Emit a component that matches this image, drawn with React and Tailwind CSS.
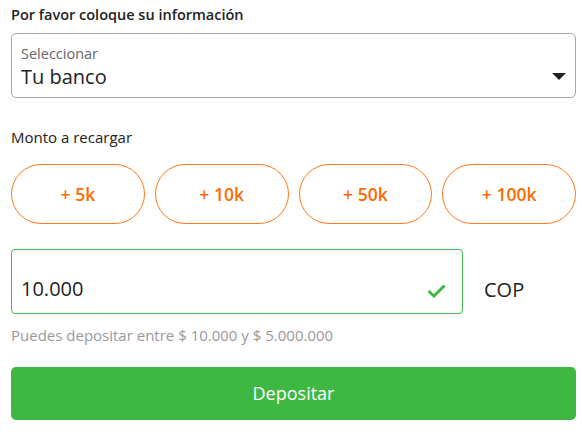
import { useState } from "react";

const amounts = ["+ 5k", "+ 10k", "+ 50k", "+ 100k"];

export default function App() {
    const [value, setValue] = useState("10.000");

    return (
        <div className="w-[582px] h-[439px] bg-white pl-[11px] pr-[6px] pt-[5px] text-[#222]" style={{ fontFamily: '"Open Sans", sans-serif' }}>
            <div className="text-[14.5px] font-semibold leading-[20px]">Por favor coloque su información</div>

            {/* bank select */}
            <div className="mt-[8px] h-[65px] border border-[#a8a8a8] rounded-[5px] flex items-end justify-between pl-[9px] pr-[9px] pb-[7px]">
                <div className="flex flex-col">
                    <span className="text-[14.5px] leading-[18px] text-[#666]">Seleccionar</span>
                    <span className="text-[20px] leading-[27px] text-[#222]">Tu banco</span>
                </div>
                <svg width="14" height="7" viewBox="0 0 14 7" className="mb-[10px]">
                    <path d="M0 0 H14 L7 7 Z" fill="#222" />
                </svg>
            </div>

            <div className="mt-[29px] text-[15px] font-medium leading-[20px]">Monto a recargar</div>

            {/* quick amounts */}
            <div className="mt-[17px] grid grid-cols-4 gap-[10px]">
                {amounts.map((a) => (
                    <button
                        key={a}
                        className="h-[60px] rounded-full border border-[#ff7a1a] text-[#ff6a00] text-[17.5px] font-semibold"
                    >
                        {a}
                    </button>
                ))}
            </div>

            {/* amount input */}
            <div className="mt-[25px] flex items-center">
                <div className="w-[452px] h-[65px] border border-[#45b849] rounded-[4px] flex items-end justify-between pl-[9px] pr-[16px] pb-[9px]">
                    <input
                        value={value}
                        onChange={(e) => setValue(e.target.value)}
                        className="mb-[2px] w-[360px] outline-none text-[20px] leading-[27px] text-[#222] bg-transparent"
                    />
                    <svg width="19" height="14" viewBox="0 0 19 14" className="mb-[6px]">
                        <path d="M1.5 7 L7 12 L17.5 1.5" fill="none" stroke="#3fb843" strokeWidth="3" />
                    </svg>
                </div>
                <span className="ml-[21px] mt-[16px] text-[20px] text-[#222]">COP</span>
            </div>

            <div className="mt-[11px] text-[15px] leading-[20px] text-[#999]">Puedes depositar entre $ 10.000 y $ 5.000.000</div>

            <button className="mt-[22px] w-full h-[53px] rounded-[5px] bg-[#3fb843] text-white text-[18px]">
                Depositar
            </button>
        </div>
    );
}
